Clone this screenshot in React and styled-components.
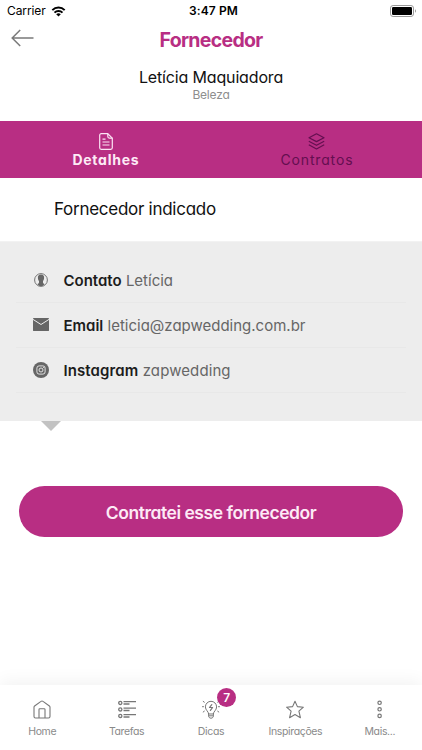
import React from 'react';
import styled, { createGlobalStyle } from 'styled-components'

const GlobalStyle = createGlobalStyle`
    * {
        box-sizing: border-box;
    }
    body {
        margin: 0;
        background: #fff;
        font-family: Inter, 'Open Sans', sans-serif;
        font-feature-settings: 'cv11' 1;
        overflow: hidden;
    }
    svg {
        display: block;
        flex: none;
    }
`

const tabs = [
    { label: 'Detalhes', icon: <DocIcon />, active: true, spacing: 0.75 },
    { label: 'Contratos', icon: <LayersIcon />, active: false, spacing: 0.85 },
]

const contacts = [
    { label: 'Contato', value: 'Letícia', icon: <PersonIcon />, spacing: 0 },
    { label: 'Email', value: 'leticia@zapwedding.com.br', icon: <MailIcon />, spacing: 0 },
    { label: 'Instagram', value: 'zapwedding', icon: <InstagramIcon />, spacing: 0.1 },
]

const navItems = [
    { label: 'Home', icon: <HomeIcon /> },
    { label: 'Tarefas', icon: <TasksIcon /> },
    { label: 'Dicas', icon: <BulbIcon />, badge: 7 },
    { label: 'Inspirações', icon: <StarIcon /> },
    { label: 'Mais...', icon: <MoreIcon /> },
]

const App = () => {
    return (
        <Screen>
            <GlobalStyle />
            <StatusBar>
                <Carrier>
                    <span>Carrier</span>
                    <WifiIcon />
                </Carrier>
                <Clock>3:47 PM</Clock>
                <Battery>
                    <BatteryIcon />
                </Battery>
            </StatusBar>
            <Header>
                <BackButton aria-label="Voltar">
                    <BackIcon />
                </BackButton>
                <Title>Fornecedor</Title>
            </Header>
            <Supplier>
                <SupplierName>Letícia Maquiadora</SupplierName>
                <Category>Beleza</Category>
            </Supplier>
            <Tabs>
                {tabs.map((tab) => (
                    <Tab key={tab.label} $active={tab.active} $spacing={tab.spacing}>
                        {tab.icon}
                        <span>{tab.label}</span>
                    </Tab>
                ))}
            </Tabs>
            <SectionTitle>Fornecedor indicado</SectionTitle>
            <Panel>
                {contacts.map((item) => (
                    <ContactRow key={item.label}>
                        <IconSlot>{item.icon}</IconSlot>
                        <ContactText $spacing={item.spacing}>
                            <strong>{item.label}</strong> {item.value}
                        </ContactText>
                    </ContactRow>
                ))}
            </Panel>
            <Pointer />
            <HireButton>Contratei esse fornecedor</HireButton>
            <BottomNav>
                {navItems.map((item) => (
                    <NavItem key={item.label}>
                        <NavIcon>
                            {item.icon}
                            {item.badge && <Badge>{item.badge}</Badge>}
                        </NavIcon>
                        <span>{item.label}</span>
                    </NavItem>
                ))}
            </BottomNav>
        </Screen>
    );
}

export default App;

function WifiIcon() {
    return (
        <svg width="15" height="11" viewBox="0 0 14 11" fill="none" stroke="#000" strokeWidth="2">
            <path d="M0.8 4.1a8.9 8.9 0 0 1 12.4 0" />
            <path d="M3 6.6a5.7 5.7 0 0 1 8 0" />
            <path d="M7 10.6 4.7 8.3a3.3 3.3 0 0 1 4.6 0z" fill="#000" stroke="none" />
        </svg>
    )
}

function BatteryIcon() {
    return (
        <svg width="27" height="12" viewBox="0 0 27 12">
            <rect x="0.5" y="0.5" width="23" height="11" rx="2.6" fill="none" stroke="#999" />
            <rect x="2" y="2" width="20" height="8" rx="1.2" fill="#000" />
            <path d="M25 4.2a2.1 2.1 0 0 1 0 3.6z" fill="#999" />
        </svg>
    )
}

function BackIcon() {
    return (
        <svg width="24" height="18" viewBox="0 0 24 18" fill="none" stroke="#7a7a7a" strokeWidth="1.5">
            <path d="M9.2 1 1.2 9l8 8M1.2 9H22.5" />
        </svg>
    )
}

function DocIcon() {
    return (
        <svg width="14" height="17" viewBox="0 0 14 17" fill="none" stroke="#fbe3f3" strokeWidth="1.2" strokeLinejoin="round">
            <path d="M2.2 0.7h6.6l4.5 4.4v9.7a1.5 1.5 0 0 1-1.5 1.5H2.2a1.5 1.5 0 0 1-1.5-1.5V2.2A1.5 1.5 0 0 1 2.2 0.7z" />
            <path d="M8.8 0.7v2.9a1.5 1.5 0 0 0 1.5 1.5h3M3.5 6.2h3M3.5 9h7M3.5 12h7" />
        </svg>
    )
}

function LayersIcon() {
    return (
        <svg width="17" height="17" viewBox="0 0 17 17" fill="none" stroke="#640f50" strokeWidth="1.2" strokeLinejoin="round">
            <path d="M8.5 0.8 16 4.8 8.5 8.6 1 4.8z" />
            <path d="M0.8 8.3 8.5 12.3l7.7-4" />
            <path d="M0.8 11.8 8.5 16l7.7-4.2" />
        </svg>
    )
}

function PersonIcon() {
    return (
        <svg width="14" height="14" viewBox="0 0 14 14">
            <circle cx="7" cy="7" r="6.4" fill="none" stroke="#666" strokeWidth="0.9" />
            <path d="M7 1.6c2.3 0 3.3 1.3 3.1 3.3-.1 1.5-.5 2.4-1.1 3v1.6c0 .7.9 1.1 1.5 1.7C9.6 12.5 8.5 13 7 13s-2.6-.5-3.5-1.8c.6-.6 1.5-1 1.5-1.7V7.900c-.6-.6-1-1.5-1.1-3C3.7 2.9 4.7 1.6 7 1.6z" fill="#666" />
        </svg>
    )
}

function MailIcon() {
    return (
        <svg width="16" height="13" viewBox="0 0 16 13">
            <rect width="16" height="13" rx="0.4" fill="#666" />
            <path d="M0 1.4 8 6.5l8-5.1" fill="none" stroke="#ededed" strokeWidth="1" />
        </svg>
    )
}

function InstagramIcon() {
    return (
        <svg width="16" height="16" viewBox="0 0 16 16" fill="none" stroke="#ededed">
            <circle cx="8" cy="8" r="8" fill="#666" stroke="none" />
            <rect x="3.9" y="3.9" width="8.2" height="8.2" rx="2.2" strokeWidth="0.9" />
            <circle cx="8" cy="8" r="2" strokeWidth="0.9" />
            <circle cx="10.5" cy="5.6" r="0.5" fill="#ededed" stroke="none" />
        </svg>
    )
}

function HomeIcon() {
    return (
        <svg width="18" height="19" viewBox="0 0 18 19" fill="none" stroke="#777" strokeWidth="1.1" strokeLinejoin="round">
            <path d="M1 7.2a1.5 1.5 0 0 1 .6-1.2L8 1.4a1.6 1.6 0 0 1 2 0L16.4 6a1.5 1.5 0 0 1 .6 1.2v9.3a1.5 1.5 0 0 1-1.5 1.5h-13A1.5 1.5 0 0 1 1 16.5z" />
            <path d="M6 18V9.5a.8.8 0 0 1 .8-.8h4.400a.8.8 0 0 1 .8.8V18" />
        </svg>
    )
}

function TasksIcon() {
    return (
        <svg width="18" height="19" viewBox="0 0 18 19" fill="none" stroke="#777" strokeWidth="1.3">
            {[2.9, 9.4, 15.9].map((y) => (
                <g key={y}>
                    <circle cx="2.3" cy={y} r="1.6" />
                    <path d={`M5.5 ${y - 1.2}H18M5.5 ${y + 1.1}h6`} />
                </g>
            ))}
        </svg>
    )
}

function BulbIcon() {
    return (
        <svg width="18" height="19" viewBox="0 0 18 19" fill="none" stroke="#777" strokeWidth="1" strokeLinecap="round" strokeLinejoin="round">
            <path d="M6.6 13.6c0-2.2-3.2-3.3-3.2-6.7a5.6 5.6 0 0 1 11.2 0c0 3.4-3.2 4.5-3.2 6.7z" />
            <path d="M6.6 13.6v2.2c0 1.2.8 2.4 2.4 2.4s2.4-1.2 2.4-2.4v-2.2M6.8 15.8h4.4" />
            <path d="M9.8 4.6 7.5 7.5h3.1L8.4 10.4" strokeWidth="1.2" />
            <path d="M1.2 1.4l1.1.8M.5 6.7h1M1.2 12l1.1-.8M16.8 12l-1.1-.8M17.5 6.7h-1M16.8 1.4l-1.1.8" />
        </svg>
    )
}

function StarIcon() {
    return (
        <svg width="18" height="19" viewBox="0 0 18 19" fill="none" stroke="#777" strokeWidth="1.1" strokeLinejoin="round">
            <path d="M9 1.2l2.4 5.4 6 .6-4.5 4 1.5 6.5L9 14.5l-5.4 3.2 1.5-6.5-4.5-4 6-.6z" />
        </svg>
    )
}

function MoreIcon() {
    return (
        <svg width="18" height="19" viewBox="0 0 18 19" fill="none" stroke="#777" strokeWidth="1.2">
            <circle cx="8.6" cy="2.8" r="1.7" />
            <circle cx="8.6" cy="9.3" r="1.7" />
            <circle cx="8.6" cy="15.9" r="1.7" />
        </svg>
    )
}

const Screen = styled.div`
    display: flex;
    flex-direction: column;
    width: 422px;
    height: 750px;
    background: #fff;
`

const StatusBar = styled.div`
    display: grid;
    grid-template-columns: 1fr auto 1fr;
    align-items: center;
    height: 22px;
    padding: 0 5px 0 7px;
    color: #000;
    font-size: 12px;
    line-height: 22px;
    font-feature-settings: normal;
`

const Carrier = styled.div`
    display: flex;
    align-items: center;
    gap: 5px;
    letter-spacing: -0.1px;
`

const Clock = styled.div`
    padding-left: 3px;
    font-weight: 600;
    letter-spacing: 0.1px;
`

const Battery = styled.div`
    display: flex;
    justify-content: flex-end;
`

const Header = styled.div`
    display: grid;
    grid-template-columns: 60px 1fr 60px;
    align-items: center;
    height: 36px;
`

const BackButton = styled.button`
    border: none;
    background: none;
    padding: 0 0 4px 11px;
    cursor: pointer;
`

const Title = styled.h1`
    margin: 0;
    color: #b82e83;
    font-size: 19.5px;
    font-weight: 650;
    letter-spacing: -0.7px;
    text-align: center;
`

const Supplier = styled.div`
    display: flex;
    flex-direction: column;
    align-items: center;
    height: 62.5px;
    padding-top: 9px;
`

const SupplierName = styled.div`
    color: #111;
    font-size: 16px;
    line-height: 20px;
    letter-spacing: -0.15px;
`

const Category = styled.div`
    color: #8e8e8e;
    font-size: 12px;
    line-height: 15px;
    letter-spacing: -0.2px;
`

const Tabs = styled.div`
    display: grid;
    grid-template-columns: 1fr 1fr;
    height: 57px;
    background: #b82e83;
`

const Tab = styled.button`
    display: flex;
    flex-direction: column;
    align-items: center;
    gap: 1px;
    padding: 12px 0 0;
    border: none;
    background: none;
    color: ${(props) => (props.$active ? '#fdeaf6' : '#640f50')};
    font-family: inherit;
    font-feature-settings: inherit;
    font-size: 14px;
    font-weight: ${(props) => (props.$active ? 700 : 400)};
    letter-spacing: ${(props) => props.$spacing}px;
    line-height: 18px;
    cursor: pointer;

    span {
        margin-right: ${(props) => -props.$spacing}px;
    }
`

const SectionTitle = styled.h2`
    margin: 0;
    height: 63px;
    padding-left: 54px;
    color: #111;
    font-size: 17px;
    font-weight: 400;
    line-height: 63px;
    letter-spacing: -0.27px;
`

const Panel = styled.div`
    height: 180px;
    padding: 16px 16px 0;
    background: #ededed;
    border-top: 1px solid #f2f2f2;
`

const ContactRow = styled.div`
    display: flex;
    align-items: center;
    height: 45px;
    border-bottom: 1px solid #e8e8e8;
`

const IconSlot = styled.div`
    display: flex;
    justify-content: center;
    width: 50px;
    margin-right: -2.5px;
`

const ContactText = styled.div`
    padding-top: 2px;
    color: #666;
    font-size: 15px;
    letter-spacing: ${(props) => props.$spacing}px;

    strong {
        color: #1c1c1c;
        font-weight: 600;
    }
`

const Pointer = styled.div`
    width: 0;
    margin-left: 41px;
    border: 10px solid transparent;
    border-top-color: #c2c2c2;
    border-bottom: none;
`

const HireButton = styled.button`
    height: 51px;
    margin: 55.5px 19px 0;
    padding-top: 3px;
    border: none;
    border-radius: 26px;
    background: #b82e83;
    color: #fdeaf6;
    font-family: inherit;
    font-feature-settings: inherit;
    font-size: 17.5px;
    font-weight: 600;
    letter-spacing: -0.46px;
    cursor: pointer;
`

const BottomNav = styled.div`
    display: grid;
    grid-template-columns: repeat(5, 1fr);
    height: 65px;
    margin-top: auto;
    background: #fff;
    box-shadow: 0 -4px 16px rgba(0, 0, 0, 0.05);
`

const NavItem = styled.div`
    display: flex;
    flex-direction: column;
    align-items: center;
    gap: 6px;
    padding-top: 15px;
    color: #8a8a8a;
    font-size: 10.5px;
    line-height: 13px;
    letter-spacing: -0.35px;
`

const NavIcon = styled.div`
    position: relative;
`

const Badge = styled.span`
    position: absolute;
    left: 15px;
    top: -12px;
    width: 19px;
    height: 19px;
    border-radius: 50%;
    background: #b82e83;
    color: #fff;
    font-size: 12px;
    font-weight: 600;
    line-height: 19px;
    text-align: center;
`
